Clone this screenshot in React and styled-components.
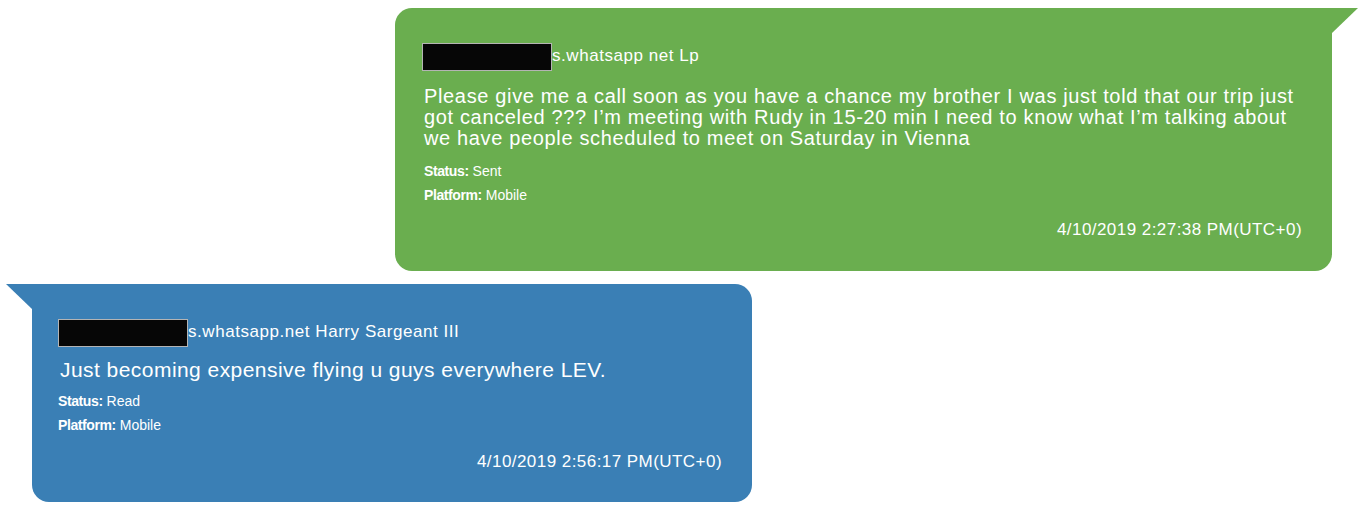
import React from "react";
import styled, { createGlobalStyle } from "styled-components";

const GlobalStyle = createGlobalStyle`
  html, body {
    margin: 0;
    padding: 0;
    background: #fff;
  }
  body {
    font-family: "Liberation Sans", Arial, sans-serif;
  }
`;

const messages = [
  {
    id: 1,
    side: "right",
    host: "s.whatsapp net Lp",
    body:
      "Please give me a call soon as you have a chance my brother I was just told that our trip just got canceled ??? I\u2019m meeting with Rudy in 15-20 min I need to know what I\u2019m talking about we have people scheduled to meet on Saturday in Vienna",
    status: "Sent",
    platform: "Mobile",
    time: "4/10/2019 2:27:38 PM(UTC+0)"
  },
  {
    id: 2,
    side: "left",
    host: "s.whatsapp.net Harry Sargeant III",
    body: "Just becoming expensive flying u guys everywhere LEV.",
    status: "Read",
    platform: "Mobile",
    time: "4/10/2019 2:56:17 PM(UTC+0)"
  }
];

const App = () => {
  return (
    <>
      <GlobalStyle />
      <Thread>
        {messages.map((msg) => (
          <Bubble key={msg.id} $side={msg.side}>
            <Sender $side={msg.side}>
              <Redacted />
              <Host>{msg.host}</Host>
            </Sender>
            <Body $side={msg.side}>{msg.body}</Body>
            <Meta>
              <b>Status:</b> {msg.status}
            </Meta>
            <Meta>
              <b>Platform:</b> {msg.platform}
            </Meta>
            <Stamp $side={msg.side}>{msg.time}</Stamp>
          </Bubble>
        ))}
      </Thread>
    </>
  );
};

const Thread = styled.div`
  display: flex;
  flex-direction: column;
  gap: 13px;
  width: 1372px;
  padding-top: 8px;
  color: #fff;
`;

const Bubble = styled.div`
  position: relative;
  box-sizing: border-box;
  display: flex;
  flex-direction: column;
  width: ${(p) => (p.$side === "right" ? "937px" : "720px")};
  margin-left: ${(p) => (p.$side === "right" ? "395px" : "32px")};
  padding: ${(p) =>
    p.$side === "right" ? "35px 30px 31px 29px" : "35px 30px 30px 26px"};
  background: ${(p) => (p.$side === "right" ? "#6aae4f" : "#3a7fb5")};
  border-radius: ${(p) =>
    p.$side === "right" ? "17px 0 17px 17px" : "0 17px 17px 17px"};

  &::after {
    content: "";
    position: absolute;
    top: 0;
    width: 26px;
    height: 25px;
    background: inherit;
    ${(p) =>
      p.$side === "right"
        ? `right: -26px; clip-path: polygon(0 0, 100% 0, 0 100%);`
        : `left: -26px; clip-path: polygon(0 0, 100% 0, 100% 100%);`}
  }
`;

const Sender = styled.div`
  display: flex;
  align-items: flex-end;
  height: 28px;
  margin-left: ${(p) => (p.$side === "right" ? "-2px" : "0")};
`;

const Redacted = styled.span`
  box-sizing: border-box;
  width: 130px;
  height: 28px;
  background: #060606;
  border: 1px solid rgba(255, 255, 255, 0.7);
`;

const Host = styled.span`
  font-size: 17px;
  letter-spacing: 0.55px;
  line-height: 20px;
  padding-bottom: 5px;
`;

const Body = styled.p`
  margin: ${(p) => (p.$side === "right" ? "15px 0 10px" : "12px 0 9px 2px")};
  font-size: ${(p) => (p.$side === "right" ? "20px" : "21px")};
  letter-spacing: ${(p) => (p.$side === "right" ? "0.65px" : "0.45px")};
  line-height: 21px;
`;

const Meta = styled.div`
  font-size: 14px;
  line-height: 24px;

  b {
    font-weight: bold;
    letter-spacing: -0.4px;
  }
`;

const Stamp = styled.div`
  margin-top: ${(p) => (p.$side === "right" ? "13px" : "15px")};
  text-align: right;
  font-size: 17px;
  letter-spacing: 0.45px;
  line-height: 20px;
`;

export default App;
